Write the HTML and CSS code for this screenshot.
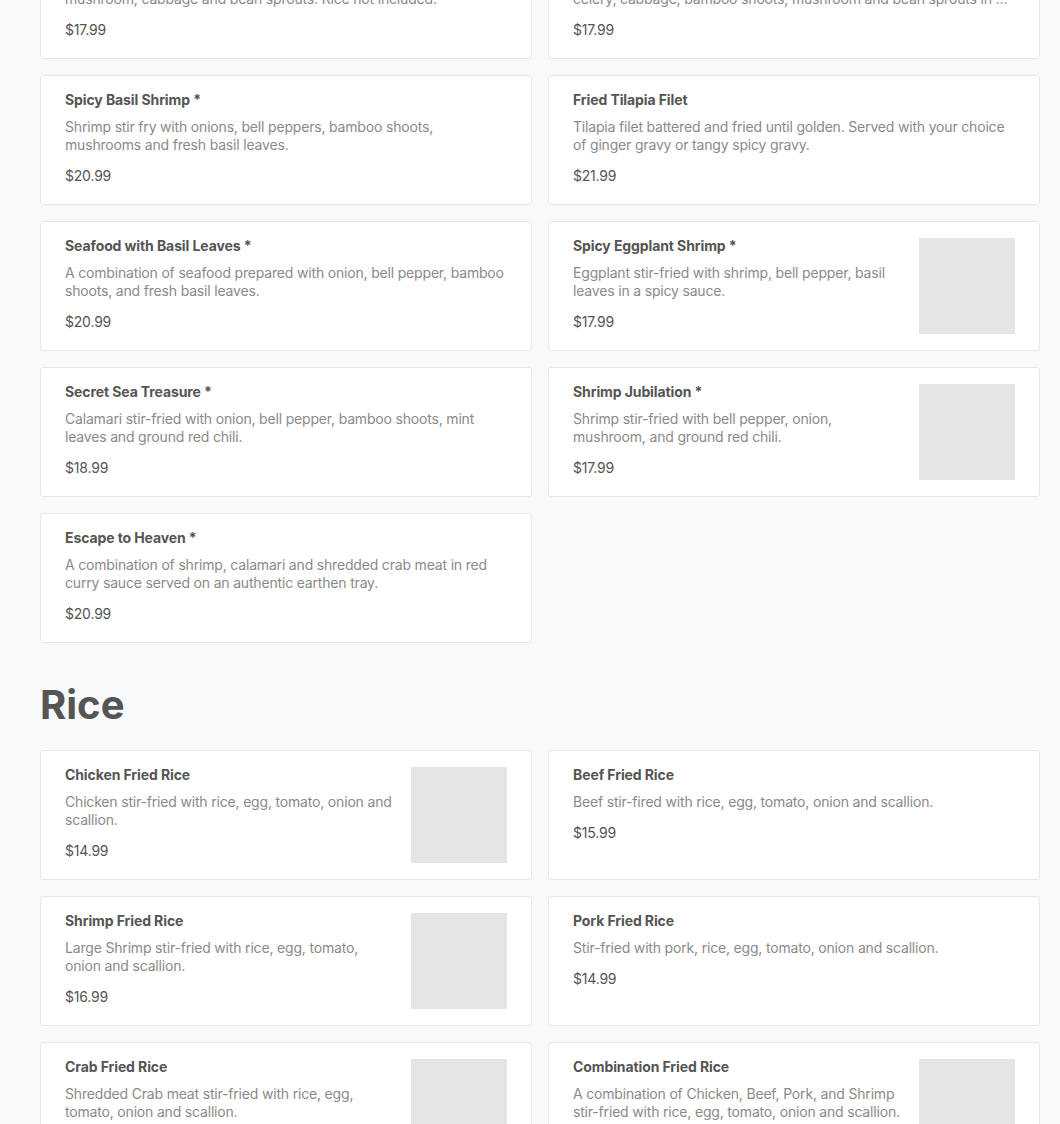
FILE: index.html
```html
<!DOCTYPE html>
<html lang="en">
<head>
<meta charset="utf-8">
<title>Menu</title>
<link rel="stylesheet" href="styles.css">
</head>
<body>
<main class="menu">
  <section class="section section-cut">
    <div class="grid">
      <div class="card">
        <div class="info">
          <div class="name">Pad Woon Sen</div>
          <div class="desc">Stir-fried glass noodles with egg, onion, tomato, carrot, celery, mushroom, cabbage and bean sprouts. Rice not included.</div>
          <div class="price">$17.99</div>
        </div>
      </div>
      <div class="card">
        <div class="info">
          <div class="name">Mixed Vegetables</div>
          <div class="desc">Stir-fried broccoli, carrot, snow peas, baby corn, zucchini, onion, celery, cabbage, bamboo shoots, mushroom and bean sprouts in a light brown garlic sauce.</div>
          <div class="price">$17.99</div>
        </div>
      </div>
      <div class="card">
        <div class="info">
          <div class="name">Spicy Basil Shrimp *</div>
          <div class="desc">Shrimp stir fry with onions, bell peppers, bamboo shoots, mushrooms and fresh basil leaves.</div>
          <div class="price">$20.99</div>
        </div>
      </div>
      <div class="card">
        <div class="info">
          <div class="name">Fried Tilapia Filet</div>
          <div class="desc">Tilapia filet battered and fried until golden. Served with your choice of ginger gravy or tangy spicy gravy.</div>
          <div class="price">$21.99</div>
        </div>
      </div>
      <div class="card">
        <div class="info">
          <div class="name">Seafood with Basil Leaves *</div>
          <div class="desc">A combination of seafood prepared with onion, bell pepper, bamboo shoots, and fresh basil leaves.</div>
          <div class="price">$20.99</div>
        </div>
      </div>
      <div class="card">
        <div class="info">
          <div class="name">Spicy Eggplant Shrimp *</div>
          <div class="desc">Eggplant stir-fried with shrimp, bell pepper, basil leaves in a spicy sauce.</div>
          <div class="price">$17.99</div>
        </div>
        <div class="thumb"></div>
      </div>
      <div class="card">
        <div class="info">
          <div class="name">Secret Sea Treasure *</div>
          <div class="desc">Calamari stir-fried with onion, bell pepper, bamboo shoots, mint leaves and ground red chili.</div>
          <div class="price">$18.99</div>
        </div>
      </div>
      <div class="card">
        <div class="info">
          <div class="name">Shrimp Jubilation *</div>
          <div class="desc">Shrimp stir-fried with bell pepper, onion, mushroom, and ground red chili.</div>
          <div class="price">$17.99</div>
        </div>
        <div class="thumb"></div>
      </div>
      <div class="card">
        <div class="info">
          <div class="name">Escape to Heaven *</div>
          <div class="desc">A combination of shrimp, calamari and shredded crab meat in red curry sauce served on an authentic earthen tray.</div>
          <div class="price">$20.99</div>
        </div>
      </div>
    </div>
  </section>

  <section class="section">
    <h2 class="section-title">Rice</h2>
    <div class="grid">
      <div class="card">
        <div class="info">
          <div class="name">Chicken Fried Rice</div>
          <div class="desc">Chicken stir-fried with rice, egg, tomato, onion and scallion.</div>
          <div class="price">$14.99</div>
        </div>
        <div class="thumb"></div>
      </div>
      <div class="card">
        <div class="info">
          <div class="name">Beef Fried Rice</div>
          <div class="desc">Beef stir-fired with rice, egg, tomato, onion and scallion.</div>
          <div class="price">$15.99</div>
        </div>
      </div>
      <div class="card">
        <div class="info">
          <div class="name">Shrimp Fried Rice</div>
          <div class="desc">Large Shrimp stir-fried with rice, egg, tomato, onion and scallion.</div>
          <div class="price">$16.99</div>
        </div>
        <div class="thumb"></div>
      </div>
      <div class="card">
        <div class="info">
          <div class="name">Pork Fried Rice</div>
          <div class="desc">Stir-fried with pork, rice, egg, tomato, onion and scallion.</div>
          <div class="price">$14.99</div>
        </div>
      </div>
      <div class="card">
        <div class="info">
          <div class="name">Crab Fried Rice</div>
          <div class="desc">Shredded Crab meat stir-fried with rice, egg, tomato, onion and scallion.</div>
          <div class="price">$17.99</div>
        </div>
        <div class="thumb"></div>
      </div>
      <div class="card">
        <div class="info">
          <div class="name">Combination Fried Rice</div>
          <div class="desc">A combination of Chicken, Beef, Pork, and Shrimp stir-fried with rice, egg, tomato, onion and scallion.</div>
          <div class="price">$17.99</div>
        </div>
        <div class="thumb"></div>
      </div>
    </div>
  </section>
</main>
</body>
</html>
```

FILE: styles.css
```css
html, body {
  margin: 0;
  padding: 0;
  background: #f8f9fa;
}
body {
  font-family: Inter, "Noto Sans", sans-serif;
  color: #555;
  overflow: hidden;
}
.menu {
  padding: 0 20px 0 40px;
  width: 1000px;
}
.section-cut {
  margin-top: -71px;
}
.section-title {
  margin: 38px 0 21px 0;
  font-family: Inter, sans-serif;
  font-size: 40px;
  line-height: 48px;
  font-weight: 700;
  color: #555;
}
.grid {
  display: grid;
  grid-template-columns: 1fr 1fr;
  gap: 16px;
}
.card {
  display: flex;
  gap: 16px;
  background: #fff;
  border: 1px solid #e8e8e8;
  border-radius: 3px;
  padding: 16px 24px;
  min-height: 96px;
}
.info {
  flex: 1;
  min-width: 0;
}
.name {
  font-size: 14px;
  line-height: 15px;
  font-weight: 700;
  color: #555;
  letter-spacing: -0.1px;
}
.desc {
  margin-top: 11px;
  font-size: 14px;
  line-height: 18px;
  color: #8a8a8a;
  letter-spacing: -0.18px;
  display: -webkit-box;
  -webkit-line-clamp: 2;
  -webkit-box-orient: vertical;
  overflow: hidden;
}
.price {
  margin-top: 12px;
  font-size: 14px;
  line-height: 20px;
  color: #555;
  letter-spacing: -0.2px;
}
.thumb {
  flex: 0 0 96px;
  width: 96px;
  height: 96px;
  background: #e5e5e5;
}
```
